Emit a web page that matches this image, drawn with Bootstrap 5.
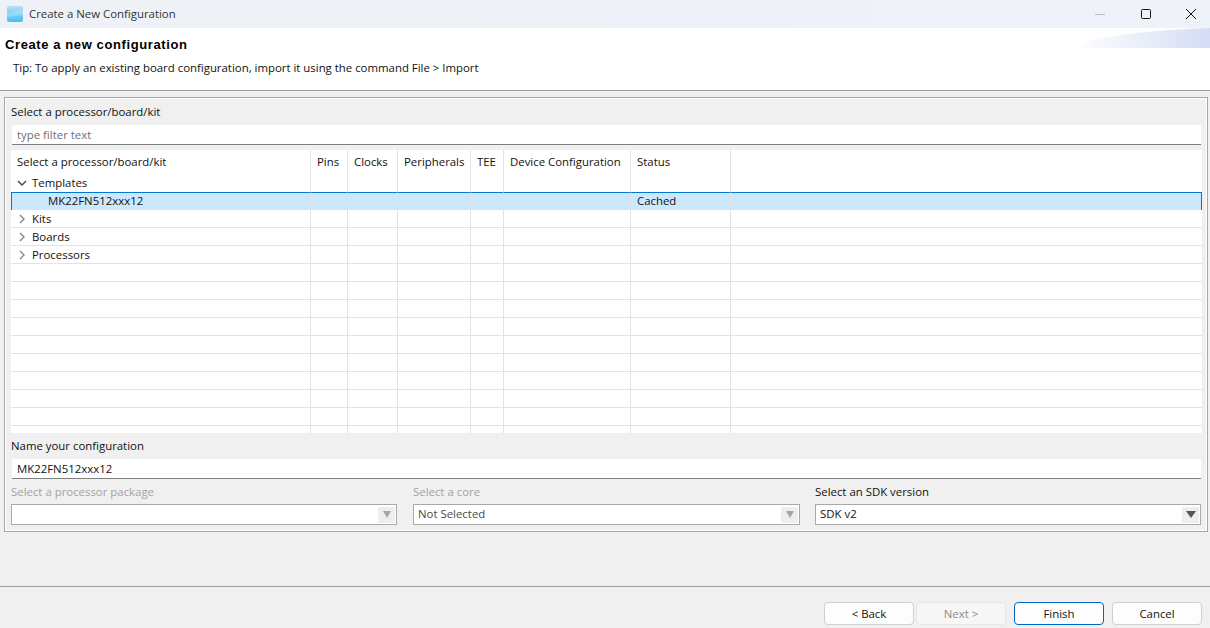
<!DOCTYPE html>
<html lang="en">
<head>
<meta charset="utf-8">
<title>Create a New Configuration</title>
<link href="https://cdn.jsdelivr.net/npm/bootstrap@5.3.0/dist/css/bootstrap.min.css" rel="stylesheet">
<style>
html,body{height:628px;overflow:hidden;}
body{background:#f0f0f0;color:#111;font-family:"Open Sans","Noto Sans",sans-serif;font-size:11.4px;line-height:16px;}
.win-bar{height:28px;background:linear-gradient(90deg,#eef2f7,#eef2f9);padding-left:7px;padding-right:9px;}
.win-title{color:#333;margin-left:6px;margin-top:-1px;}
.win-ctls{gap:25.5px;}
.win-ctl{width:20px;height:28px;}
.head-area{height:62px;background:#fff;position:relative;padding:9px 5px 0;}
.head-title{font-family:"Liberation Sans",sans-serif;font-weight:700;font-size:13px;letter-spacing:.6px;line-height:16px;color:#000;}
.head-tip{margin:7px 0 0 8px;}
.head-wave{position:absolute;right:0;top:0;}
.rule-top{height:1px;background:#a0a0a0;margin-bottom:6px;}
.group-frame{margin:0 2px 0 4px;height:435px;border:1px solid #a6a6a6;box-shadow:inset 0 0 0 1px #fff;padding:7px 6px 0 6px;}
.fld-label{height:20px;line-height:14px;}
.fld-input.form-control{height:20px;min-height:0;margin:0 0 5px 1px;width:calc(100% - 1px);font-size:11.4px;line-height:16px;padding:0 5px;border:0;border-bottom:1px solid #808080;border-radius:0;background:#fff;color:#111;font-family:inherit;box-shadow:none;}
.fld-input.form-control::placeholder{color:#6f6f6f;opacity:1;}
.tree-wrap{height:283px;overflow:hidden;background:#fff;margin-right:-1px;}
.tree-tbl.table{table-layout:fixed;width:1191px;margin:0;border-collapse:separate;border-spacing:0;--bs-table-bg:transparent;--bs-table-color:#111;font-size:11.4px;}
.tree-tbl th,.tree-tbl td{padding:0 6px;height:18px;line-height:17px;font-weight:400;border:0;border-right:1px solid #e3e3e3;border-bottom:1px solid #e3e3e3;white-space:nowrap;overflow:hidden;}
.tree-tbl th:last-child,.tree-tbl td:last-child{border-right:0;}
.tree-tbl thead th{height:24px;border-bottom:0;line-height:20px;vertical-align:top;padding-top:2px;}
.tree-tbl tr.r-plain td{border-bottom:0;}
.tree-tbl tr.r-sel td{background:#cce8ff;border-top:1px solid #0078d4;border-bottom:0;height:18px;line-height:16px;}
.tree-tbl tr.r-sel td:first-child{border-left:1px solid #0078d4;}
.tree-tbl tr.r-sel td:last-child{border-right:1px solid #0078d4;}
.tree-tbl tr td.nm{padding-left:6px;}
.tree-tbl tr.r-sel td.nm{padding-left:36px;}
.tree-arrow{display:inline-block;vertical-align:-1px;margin-right:5px;}
.fld-label.name-lbl-row{height:21px;margin-top:5px;line-height:16px;}
.combo-row{display:flex;gap:16px;}
.combo-col{width:386px;flex:0 0 auto;}
.combo-col.c2{width:387px;margin-right:-1px;}
.combo-lbl{height:19px;line-height:16px;}
.combo-lbl.off{color:#a3a3a3;}
.combo-box{height:21px;margin-top:1px;border:1px solid #a9a9a9;background:#fff;padding-left:4px;line-height:17px;}
.combo-val{margin-top:-3px;}
.combo-val.off{color:#4a4a4a;}
.combo-btn{width:17px;height:16px;margin-right:1px;background:#eeeeee;}
.rule-bot{height:1px;background:#a0a0a0;margin-top:54px;}
.foot-bar{padding:15px 8px 0 0;gap:2px;}
.dlg-btn.btn{width:90px;height:23px;padding:0;font-size:11.4px;line-height:21px;color:#111;background:#fdfdfd;border:1px solid #d0d0d0;border-radius:4px;font-family:inherit;}
.dlg-btn.btn:disabled{background:#f7f7f7;color:#8a8a8a;border-color:#e6e6e6;opacity:1;}
.dlg-btn.btn.is-main{border-color:#0067c0;margin-left:6px;margin-right:6px;}
</style>
</head>
<body>
<div class="win-bar d-flex align-items-center">
  <svg width="16" height="16" viewBox="0 0 16 16" aria-hidden="true"><defs><linearGradient id="ig" x1="0" y1="0" x2="0" y2="1"><stop offset="0" stop-color="#b7e0f4"/><stop offset="1" stop-color="#45bff5"/></linearGradient></defs><rect width="16" height="16" rx="2" fill="url(#ig)"/><path d="M0 7.5 16 4V9L0 11Z" fill="#fff" opacity=".2"/></svg>
  <span class="win-title">Create a New Configuration</span>
  <div class="ms-auto d-flex win-ctls">
    <div class="win-ctl d-flex align-items-center justify-content-center"><svg width="10" height="10" viewBox="0 0 10 10"><path d="M0 5.5H10" stroke="#bdbdbd"/></svg></div>
    <div class="win-ctl d-flex align-items-center justify-content-center"><svg width="10" height="10" viewBox="0 0 10 10"><rect x=".5" y=".5" width="9" height="9" rx="1" fill="none" stroke="#111"/></svg></div>
    <div class="win-ctl d-flex align-items-center justify-content-center"><svg width="10" height="10" viewBox="0 0 10 10"><path d="M0 0 10 10M10 0 0 10" stroke="#111" stroke-width="1"/></svg></div>
  </div>
</div>
<div class="head-area">
  <div class="head-title">Create a new configuration</div>
  <div class="head-tip">Tip: To apply an existing board configuration, import it using the command File &gt; Import</div>
  <svg class="head-wave" width="138" height="20" viewBox="0 0 138 20" aria-hidden="true"><defs><linearGradient id="wg" x1="0" y1="0" x2="1" y2="0"><stop offset="0" stop-color="#fff"/><stop offset="1" stop-color="#d4ddf5"/></linearGradient></defs><path d="M0 20C14 10 60 3 138 0V20Z" fill="url(#wg)"/></svg>
</div>
<div class="rule-top"></div>
<div class="group-frame">
  <div class="fld-label">Select a processor/board/kit</div>
  <input class="form-control fld-input" type="text" placeholder="type filter text">
  <div class="tree-wrap">
    <table class="table tree-tbl">
      <colgroup><col style="width:300px"><col style="width:37px"><col style="width:50px"><col style="width:73px"><col style="width:33px"><col style="width:127px"><col style="width:100px"><col></colgroup>
      <thead><tr><th>Select a processor/board/kit</th><th>Pins</th><th>Clocks</th><th>Peripherals</th><th>TEE</th><th>Device Configuration</th><th>Status</th><th></th></tr></thead>
      <tbody>
        <tr class="r-plain"><td class="nm"><svg class="tree-arrow" width="10" height="10" viewBox="0 0 10 10"><path d="M1 3 5 7 9 3" fill="none" stroke="#444" stroke-width="1.4"/></svg>Templates</td><td></td><td></td><td></td><td></td><td></td><td></td><td></td></tr>
        <tr class="r-sel"><td class="nm">MK22FN512xxx12</td><td></td><td></td><td></td><td></td><td></td><td>Cached</td><td></td></tr>
        <tr><td class="nm"><svg class="tree-arrow" width="10" height="10" viewBox="0 0 10 10"><path d="M3 1 7 5 3 9" fill="none" stroke="#888" stroke-width="1.4"/></svg>Kits</td><td></td><td></td><td></td><td></td><td></td><td></td><td></td></tr>
        <tr><td class="nm"><svg class="tree-arrow" width="10" height="10" viewBox="0 0 10 10"><path d="M3 1 7 5 3 9" fill="none" stroke="#888" stroke-width="1.4"/></svg>Boards</td><td></td><td></td><td></td><td></td><td></td><td></td><td></td></tr>
        <tr><td class="nm"><svg class="tree-arrow" width="10" height="10" viewBox="0 0 10 10"><path d="M3 1 7 5 3 9" fill="none" stroke="#888" stroke-width="1.4"/></svg>Processors</td><td></td><td></td><td></td><td></td><td></td><td></td><td></td></tr>
        <tr><td></td><td></td><td></td><td></td><td></td><td></td><td></td><td></td></tr>
        <tr><td></td><td></td><td></td><td></td><td></td><td></td><td></td><td></td></tr>
        <tr><td></td><td></td><td></td><td></td><td></td><td></td><td></td><td></td></tr>
        <tr><td></td><td></td><td></td><td></td><td></td><td></td><td></td><td></td></tr>
        <tr><td></td><td></td><td></td><td></td><td></td><td></td><td></td><td></td></tr>
        <tr><td></td><td></td><td></td><td></td><td></td><td></td><td></td><td></td></tr>
        <tr><td></td><td></td><td></td><td></td><td></td><td></td><td></td><td></td></tr>
        <tr><td></td><td></td><td></td><td></td><td></td><td></td><td></td><td></td></tr>
        <tr><td></td><td></td><td></td><td></td><td></td><td></td><td></td><td></td></tr>
        <tr><td></td><td></td><td></td><td></td><td></td><td></td><td></td><td></td></tr>
      </tbody>
    </table>
  </div>
  <div class="fld-label name-lbl-row">Name your configuration</div>
  <input class="form-control fld-input" type="text" value="MK22FN512xxx12">
  <div class="combo-row">
    <div class="combo-col">
      <div class="combo-lbl off">Select a processor package</div>
      <div class="combo-box d-flex align-items-center"><span class="combo-btn ms-auto d-flex align-items-center justify-content-center"><svg width="10" height="7" viewBox="0 0 10 7"><path d="M1 0H9L5 7Z" fill="#a6a6a6"/></svg></span></div>
    </div>
    <div class="combo-col c2">
      <div class="combo-lbl off">Select a core</div>
      <div class="combo-box d-flex align-items-center"><span class="combo-val off">Not Selected</span><span class="combo-btn ms-auto d-flex align-items-center justify-content-center"><svg width="10" height="7" viewBox="0 0 10 7"><path d="M1 0H9L5 7Z" fill="#a6a6a6"/></svg></span></div>
    </div>
    <div class="combo-col">
      <div class="combo-lbl">Select an SDK version</div>
      <div class="combo-box d-flex align-items-center"><span class="combo-val">SDK v2</span><span class="combo-btn ms-auto d-flex align-items-center justify-content-center"><svg width="10" height="7" viewBox="0 0 10 7"><path d="M0 0H10L5 7Z" fill="#555"/></svg></span></div>
    </div>
  </div>
</div>
<div class="rule-bot"></div>
<div class="foot-bar d-flex justify-content-end">
  <button class="btn dlg-btn" type="button">&lt; Back</button>
  <button class="btn dlg-btn" type="button" disabled>Next &gt;</button>
  <button class="btn dlg-btn is-main" type="button">Finish</button>
  <button class="btn dlg-btn" type="button">Cancel</button>
</div>
</body>
</html>
